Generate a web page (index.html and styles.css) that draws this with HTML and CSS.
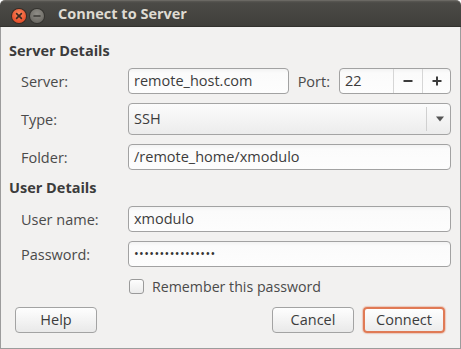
FILE: index.html
```html
<!DOCTYPE html>
<html>
<head>
<meta charset="utf-8">
<link rel="stylesheet" href="styles.css">
</head>
<body>
<div class="window">
  <div class="titlebar">
    <div class="wbtns">
      <span class="wbtn close">
        <svg width="14" height="14" viewBox="0 0 14 14"><path d="M4.6 4.6 L9.4 9.4 M9.4 4.6 L4.6 9.4" stroke="#3a2a22" stroke-width="1.6" stroke-linecap="round"/></svg>
      </span>
      <span class="wbtn mini">
        <svg width="14" height="14" viewBox="0 0 14 14"><path d="M4 7 H10" stroke="#3c3b37" stroke-width="1.6" stroke-linecap="round"/></svg>
      </span>
    </div>
    <div class="title">Connect to Server</div>
  </div>
  <div class="content">
    <div class="heading">Server Details</div>
    <div class="rows first">
      <div class="row">
        <div class="label">Server:</div>
        <div class="entry grow">remote_host.com</div>
        <div class="label port">Port:</div>
        <div class="spin">
          <div class="spin-val">22</div>
          <div class="spin-btn">
            <svg width="12" height="12" viewBox="0 0 12 12"><path d="M1.5 6 H10.5" stroke="#3c3c3c" stroke-width="2"/></svg>
          </div>
          <div class="spin-btn">
            <svg width="12" height="12" viewBox="0 0 12 12"><path d="M1.5 6 H10.5 M6 1.5 V10.5" stroke="#3c3c3c" stroke-width="2"/></svg>
          </div>
        </div>
      </div>
      <div class="row">
        <div class="label">Type:</div>
        <div class="combo grow">
          <div class="combo-val">SSH</div>
          <div class="combo-arrow">
            <svg width="10" height="6" viewBox="0 0 10 6"><path d="M1 0.5 H9 L5 5.5 Z" fill="#555"/></svg>
          </div>
        </div>
      </div>
      <div class="row">
        <div class="label">Folder:</div>
        <div class="entry grow">/remote_home/xmodulo</div>
      </div>
    </div>
    <div class="heading second">User Details</div>
    <div class="rows first">
      <div class="row">
        <div class="label">User name:</div>
        <div class="entry grow">xmodulo</div>
      </div>
      <div class="row">
        <div class="label">Password:</div>
        <div class="entry grow"><span class="dots">••••••••••••••••</span></div>
      </div>
    </div>
    <div class="checkrow">
      <span class="checkbox"></span>
      <span class="checklabel">Remember this password</span>
    </div>
    <div class="buttons">
      <div class="btn">Help</div>
      <div class="spacer"></div>
      <div class="btn">Cancel</div>
      <div class="btn default">Connect</div>
    </div>
  </div>
</div>
</body>
</html>
```

FILE: styles.css
```css
html, body {
  margin: 0;
  padding: 0;
  background: #ffffff;
}
body {
  width: 461px;
  height: 349px;
  overflow: hidden;
  font-family: "Open Sans", "Noto Sans", sans-serif;
  font-size: 14.5px;
  color: #3c3c3c;
}
.window {
  width: 461px;
  height: 349px;
  display: flex;
  flex-direction: column;
}
.titlebar {
  height: 27px;
  box-sizing: border-box;
  display: flex;
  align-items: flex-start;
  background: linear-gradient(#5a5853 0px, #4b4a46 2px, #403f3b 24px, #3a3935 27px);
  border-top: 1px solid #6a6863;
  border-radius: 5px 5px 0 0;
  border-bottom: 1px solid #33322e;
}
.wbtns {
  display: flex;
  gap: 4px;
  padding: 8px 0 0 12px;
}
.wbtn {
  width: 14px;
  height: 14px;
  border-radius: 50%;
  display: flex;
  box-sizing: border-box;
}
.wbtn svg {
  display: block;
}
.close {
  background: radial-gradient(circle at 50% 35%, #f78a5e 0%, #ee5a35 55%, #d9431f 100%);
  box-shadow: 0 0 0 1px #3a2a22;
}
.mini {
  background: radial-gradient(circle at 50% 35%, #8f8d87 0%, #76746e 55%, #5e5c57 100%);
  box-shadow: 0 0 0 1px #34332f;
}
.title {
  margin-left: 14px;
  padding-top: 3px;
  line-height: 20px;
  font-weight: bold;
  color: #dfdbd2;
}
.content {
  flex: 1;
  background: #f2f1f0;
  border: 1px solid #9c9c9c;
  border-top: none;
  padding: 14px 9px 0 8px;
  display: flex;
  flex-direction: column;
}
.heading {
  font-weight: bold;
  line-height: 20px;
  height: 20px;
  color: #3c3c3c;
}
.heading.second {
  margin-top: 8px;
}
.rows {
  display: flex;
  flex-direction: column;
  gap: 9px;
  padding-left: 12px;
}
.rows.first {
  margin-top: 7px;
}
.heading.second + .rows.first {
  margin-top: 8px;
}
.row {
  display: flex;
  align-items: center;
}
.label {
  width: 107px;
  flex: none;
  line-height: 20px;
  padding-top: 1px;
  color: #4a4a4a;
}
.label.port {
  width: auto;
  margin: 0 9px;
}
.grow {
  flex: 1;
}
.entry {
  height: 26px;
  box-sizing: border-box;
  border: 1px solid #a2a2a2;
  border-radius: 4px;
  background: linear-gradient(#f3f3f3 0px, #fbfbfb 4px, #fdfdfd 100%);
  padding: 0 5px;
  line-height: 24px;
  color: #3c3c3c;
  white-space: nowrap;
}
.dots {
  font-size: 12.5px;
  letter-spacing: 0.4px;
  vertical-align: 1px;
  color: #333333;
}
.spin {
  width: 112px;
  height: 26px;
  box-sizing: border-box;
  border: 1px solid #a2a2a2;
  border-radius: 4px;
  background: linear-gradient(#f3f3f3 0px, #fbfbfb 4px, #fdfdfd 100%);
  display: flex;
  flex: none;
}
.spin-val {
  width: 53px;
  padding-left: 5px;
  box-sizing: border-box;
  line-height: 24px;
}
.spin-btn {
  width: 29px;
  border-left: 1px solid #d6d6d6;
  box-sizing: border-box;
  display: flex;
  align-items: center;
  justify-content: center;
}
.spin-btn:last-child {
  width: 28px;
}
.combo {
  height: 32px;
  box-sizing: border-box;
  border: 1px solid #a4a4a4;
  border-radius: 4px;
  background: linear-gradient(#fcfcfc, #ececec);
  display: flex;
  align-items: center;
}
.combo-val {
  flex: 1;
  padding-left: 5px;
  line-height: 20px;
  color: #3c3c3c;
}
.combo-arrow {
  width: 24px;
  height: 24px;
  border-left: 1px solid #d0d0d0;
  box-sizing: border-box;
  display: flex;
  align-items: center;
  justify-content: center;
  padding-left: 2px;
}
.checkrow {
  display: flex;
  align-items: center;
  margin-top: 12px;
  height: 15px;
  padding-left: 120px;
}
.checkbox {
  width: 15px;
  height: 15px;
  box-sizing: border-box;
  border: 1px solid #9a9a9a;
  border-radius: 3px;
  background: linear-gradient(#fdfdfd, #ebebeb);
  flex: none;
}
.checklabel {
  margin-left: 8px;
  line-height: 20px;
  color: #4a4a4a;
  font-size: 14.2px;
}
.buttons {
  display: flex;
  margin-top: 13px;
  padding: 0 6px 0 6px;
  gap: 9px;
}
.spacer {
  flex: 1;
}
.btn {
  width: 82px;
  height: 26px;
  box-sizing: border-box;
  border: 1px solid #a3a3a3;
  border-radius: 4px;
  background: linear-gradient(#fefefe, #e9e9e9);
  text-align: center;
  line-height: 24px;
  color: #3c3c3c;
}
.btn.default {
  border: 2px solid #e07a55;
  box-shadow: 0 0 1px 1px rgba(224, 122, 85, 0.35);
  line-height: 22px;
  background: linear-gradient(#fefefe, #ececec);
}
```
